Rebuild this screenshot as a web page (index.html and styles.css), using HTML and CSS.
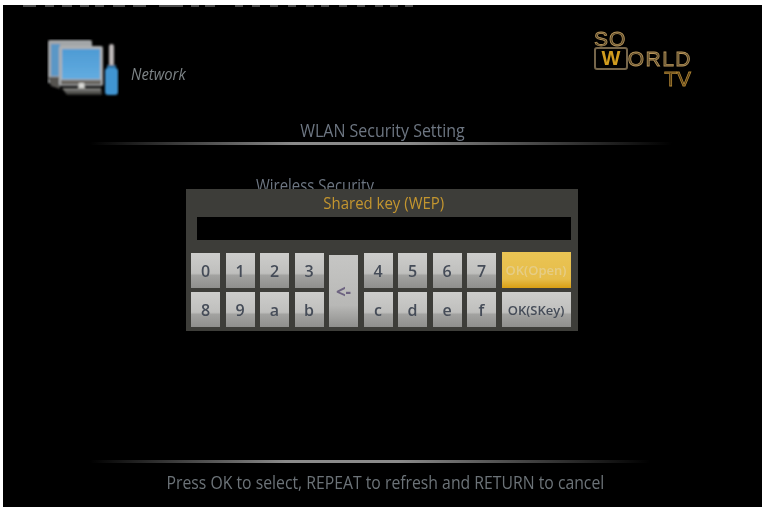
FILE: index.html
```html
<!DOCTYPE html>
<html lang="en">
	<head>
		<meta charset="utf-8">
		<title>WLAN Security Setting</title>
		<link rel="stylesheet" href="styles.css">
	</head>
	<body>
		<div class="screen">
			<svg class="strip" width="759" height="3" viewBox="0 0 759 3">
				<g fill="#4c4c4c">
					<rect x="20" width="13" height="2"/><rect x="42" width="9" height="2"/><rect x="59" width="10" height="2"/>
					<rect x="77" width="9" height="2"/><rect x="92" width="9" height="2"/><rect x="110" width="12" height="2"/>
					<rect x="130" width="13" height="2"/><rect x="156" width="24" height="2"/><rect x="188" width="8" height="2"/>
					<rect x="202" width="10" height="2"/><rect x="232" width="8" height="2"/><rect x="249" width="8" height="2"/>
					<rect x="267" width="8" height="2"/><rect x="285" width="8" height="2"/><rect x="303" width="8" height="2"/>
					<rect x="318" width="8" height="2"/><rect x="336" width="8" height="2"/><rect x="354" width="8" height="2"/>
					<rect x="372" width="8" height="2"/><rect x="387" width="8" height="2"/><rect x="402" width="8" height="2"/>
				</g>
			</svg>
			<div class="header">
				<div class="section">
					<svg class="netIcon" width="72" height="60" viewBox="0 0 72 60">
						<defs>
							<filter id="soft"><feGaussianBlur stdDeviation="0.9"/></filter>
							<linearGradient id="stand" x1="0" y1="0" x2="0" y2="1">
								<stop offset="0" stop-color="#8a8a86"/>
								<stop offset="1" stop-color="#2e2e2c"/>
							</linearGradient>
							<linearGradient id="blue" x1="0" y1="0" x2="0" y2="1">
								<stop offset="0" stop-color="#4e9bd4"/>
								<stop offset="1" stop-color="#62ace0"/>
							</linearGradient>
						</defs>
						<g filter="url(#soft)">
							<path d="M1 44 L1 3 Q1 1 3 1 L43 1 Q45 1 45 3 L45 7 L14 7 L14 44 Z" fill="#a3a6a8"/>
							<path d="M4 5 L13 5 L13 37 L4 37 Z" fill="#5a97c6"/>
							<path d="M1 38 L13 38 L13 50 L4 47 Z" fill="#55534f"/>
							<rect x="12" y="7" width="44" height="40" rx="2" fill="#adb0b2"/>
							<rect x="15" y="10" width="38" height="30" fill="url(#blue)"/>
							<rect x="14" y="41" width="40" height="5" fill="#6a6864"/>
							<path d="M32 44 L37 44 L38 49 L31 49 Z" fill="#d8d8d4"/>
							<path d="M15 49 L54 49 L55 56 L20 56 Z" fill="url(#stand)"/>
							<rect x="62" y="5" width="5" height="22" rx="2.5" fill="#bdb8b8"/>
							<rect x="60" y="26" width="9" height="5" fill="#2f6f9f"/>
							<rect x="58" y="29" width="13" height="27" rx="3" fill="#3f95d2"/>
						</g>
					</svg>
					<span class="sectionName">Network</span>
				</div>
				<div class="logo">
					<div class="logoSo">SO</div>
					<div class="logoWorld"><span class="logoW">W</span><span class="logoOrld">ORLD</span></div>
					<div class="logoTv">TV</div>
				</div>
			</div>
			<div class="title">WLAN Security Setting</div>
			<div class="rule"></div>
			<div class="content">
				<div class="fieldName">Wireless Security</div>
				<div class="dialog">
					<div class="dialogTitle">Shared key (WEP)</div>
					<div class="input"></div>
					<div class="keys">
						<div class="key">0</div>
						<div class="key">1</div>
						<div class="key">2</div>
						<div class="key">3</div>
						<div class="key back">&lt;-</div>
						<div class="key">4</div>
						<div class="key">5</div>
						<div class="key">6</div>
						<div class="key">7</div>
						<div class="key wide active">OK(Open)</div>
						<div class="key">8</div>
						<div class="key">9</div>
						<div class="key">a</div>
						<div class="key">b</div>
						<div class="key">c</div>
						<div class="key">d</div>
						<div class="key">e</div>
						<div class="key">f</div>
						<div class="key wide">OK(SKey)</div>
					</div>
				</div>
			</div>
			<div class="rule bottomRule"></div>
			<div class="help">Press OK to select, REPEAT to refresh and RETURN to cancel</div>
		</div>
	</body>
</html>
```

FILE: styles.css
```css
*{margin:0px;padding:0px;box-sizing:border-box;}
html,body{
	width:762px;
	height:507px;
	overflow:hidden;
}
body{
	background:#fff;
	padding:5px 0px 0px 3px;
	font-family:"Open Sans","Liberation Sans",sans-serif;
}
.screen{
	height:502px;
	background:#000;
	display:flex;
	flex-direction:column;
}
.strip{
	display:block;
	flex:none;
	filter:blur(0.5px);
}
.header{
	height:109px;
	flex:none;
	padding:22px 70px 0px 44px;
	display:flex;
	justify-content:space-between;
	align-items:flex-start;
}
.section{
	display:flex;
	align-items:flex-start;
	margin-top:9px;
}
.netIcon{
	display:block;
}
.sectionName{
	margin:24px 0px 0px 12px;
	font-size:17px;
	line-height:22px;
	font-style:italic;
	color:#7d8487;
	filter:blur(0.6px);
	transform:scaleX(.87);
	transform-origin:left;
}
.logo{
	width:98px;
	font-family:"Liberation Sans",sans-serif;
	filter:blur(0.6px);
}
.logoSo,.logoOrld,.logoTv{
	font-size:21px;
	color:#57482a;
	-webkit-text-stroke:0.8px #b8955a;
}
.logoSo{
	height:17px;
	line-height:17px;
	letter-spacing:1px;
}
.logoWorld{
	display:flex;
	align-items:center;
	height:23px;
}
.logoW{
	width:35px;
	height:23px;
	border:2px solid #75654a;
	border-radius:3px;
	text-align:center;
	font-size:20px;
	line-height:19px;
	font-weight:bold;
	color:#d19c1e;
}
.logoOrld{
	letter-spacing:1.5px;
	line-height:19px;
}
.logoTv{
	height:18px;
	line-height:18px;
	text-align:right;
	padding-right:1px;
	color:#4f3a14;
	-webkit-text-stroke:0.8px #ad8233;
}
.title{
	height:25px;
	flex:none;
	text-align:center;
	font-size:18px;
	line-height:26px;
	color:#6d7682;
	filter:blur(0.6px);
	transform:scaleX(.887);
}
.rule{
	height:3px;
	flex:none;
	margin:0px 90px 0px 87px;
	background:linear-gradient(to right,#000,#8a8a8a 35%,#8a8a8a 55%,#000);
	filter:blur(0.6px);
}
.content{
	flex:1;
	position:relative;
	padding-top:28px;
}
.fieldName{
	margin-left:253px;
	font-size:18px;
	line-height:24px;
	color:#6d7682;
	filter:blur(0.6px);
	transform:scaleX(.83);
	transform-origin:left;
}
.dialog{
	position:absolute;
	left:183px;
	top:44px;
	width:392px;
	height:142px;
	background:#3d3d39;
	padding:0px 5px;
}
.dialogTitle{
	height:28px;
	padding-left:4px;
	text-align:center;
	font-size:17px;
	line-height:28px;
	color:#c4962f;
	filter:blur(0.5px);
	transform:scaleX(.88);
}
.input{
	height:23px;
	margin:0px 2px 0px 6px;
	background:#000;
}
.keys{
	margin-top:13px;
	display:grid;
	grid-template-columns:repeat(9,29px) 69px;
	grid-template-rows:35px 35px;
	column-gap:5.5px;
	row-gap:4px;
}
.key{
	background:linear-gradient(to bottom,#cdcdcb,#bfbfbd 58%,#a2a2a0 64%,#8f8f8d 100%);
	display:flex;
	align-items:center;
	justify-content:center;
	font-size:16px;
	font-weight:600;
	color:#454c58;
	filter:blur(0.5px);
}
.back{
	grid-column:5;
	grid-row:1 / span 2;
	font-size:17px;
	font-weight:bold;
	color:#6d6380;
	margin-top:2px;
	background:linear-gradient(to bottom,#c6c6c4,#b8b8b6 70%,#8f8f8d 100%);
}
.wide{
	grid-column:10;
	font-size:13px;
}
.active{
	margin-top:-1px;
	background:linear-gradient(to bottom,#eac454,#e6bd4a 75%,#d99f14 100%);
	color:#e6cd86;
}
.bottomRule{
	margin:0px 112px 0px 87px;
}
.help{
	height:44px;
	flex:none;
	padding-left:7px;
	text-align:center;
	font-size:19px;
	line-height:38px;
	color:#6c7378;
	filter:blur(0.6px);
	transform:scaleX(.83);
}
```
